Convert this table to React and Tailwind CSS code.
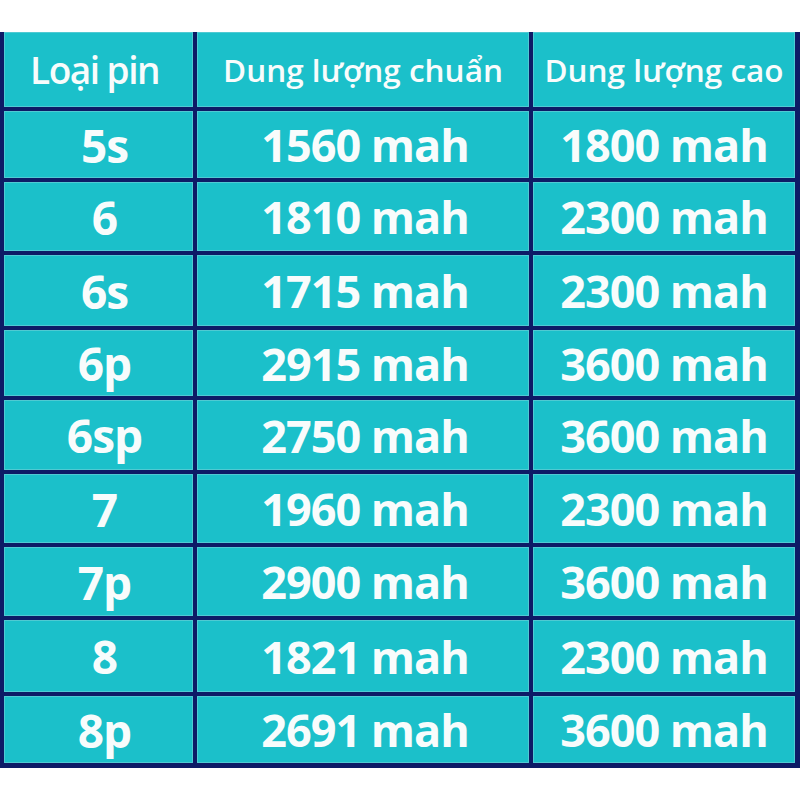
import React from "react";

const rows = [
  { model: "5s", std: "1560 mah", high: "1800 mah" },
  { model: "6", std: "1810 mah", high: "2300 mah" },
  { model: "6s", std: "1715 mah", high: "2300 mah" },
  { model: "6p", std: "2915 mah", high: "3600 mah" },
  { model: "6sp", std: "2750 mah", high: "3600 mah" },
  { model: "7", std: "1960 mah", high: "2300 mah" },
  { model: "7p", std: "2900 mah", high: "3600 mah" },
  { model: "8", std: "1821 mah", high: "2300 mah" },
  { model: "8p", std: "2691 mah", high: "3600 mah" },
];

const cell =
  "flex items-center justify-center bg-[#1bc0ca] text-[#f8fcfc] shadow-[inset_0_0_0_1px_#4fcad3] leading-none";

function App() {
  return (
    <div
      className="w-[800px] h-[800px] bg-white pt-[32px]"
      style={{ fontFamily: '"Open Sans", "Noto Sans", sans-serif' }}
    >
      <div className="grid grid-cols-[189px_332px_262px] grid-rows-[75px_67px_69px_71px_66px_70px_69px_69px_72px_67px] gap-[4px] bg-[#0d1b66] pl-[4px] pr-[5px] pb-[5px]">
        <div className={cell + " text-[37px] font-semibold tracking-[-1.5px] pr-2"}>
          Loại pin
        </div>
        <div className={cell + " text-[31.5px] font-semibold"}>
          Dung lượng chuẩn
        </div>
        <div className={cell + " text-[31.5px] font-semibold"}>
          Dung lượng cao
        </div>

        {rows.map((r) => (
          <React.Fragment key={r.model}>
            <div className={cell + " text-[46px] font-bold tracking-[-1px] pl-3"}>
              {r.model}
            </div>
            <div className={cell + " text-[45px] font-bold tracking-[-1px] pl-1"}>
              {r.std}
            </div>
            <div className={cell + " text-[45px] font-bold tracking-[-1px]"}>
              {r.high}
            </div>
          </React.Fragment>
        ))}
      </div>
    </div>
  );
}

export default App;
